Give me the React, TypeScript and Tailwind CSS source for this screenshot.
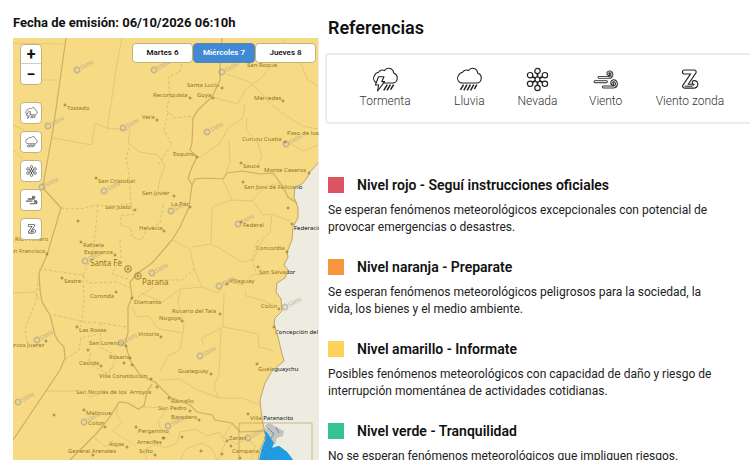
import type { ReactNode } from "react";

const CLOUD =
  "M4 15.5C1.5 14 1 11 2.3 8.8C3 7 4.4 5.6 6.6 5.2C7.6 3.4 10.4 2.4 12.6 3.6C14 .8 18.6 .2 20.6 3.2C21.4 4.2 21.6 5 21.6 6C24.2 7 25.6 9 25.2 12C24.8 14.4 23 16 20.6 16";

function Storm({ className }: { className?: string }) {
  return (
    <svg viewBox="0 0 27 25" className={className} fill="none" stroke="#222" strokeWidth="1.1" strokeLinejoin="round" aria-hidden="true">
      <path d={CLOUD + "H12"} />
      <path d="M6.5 9.8H12L9.8 14.6H12.6L5.6 24L6.6 18H3.4Z" fill="#fff" />
      <path d="M15.2 17.6L11.8 23.4M18.4 17.6L15 23.4M21.6 17.6L18.6 22.6" strokeWidth="1.5" />
    </svg>
  );
}

function Rain({ className }: { className?: string }) {
  return (
    <svg viewBox="0 0 27 25" className={className} fill="none" stroke="#222" strokeWidth="1.1" strokeLinejoin="round" aria-hidden="true">
      <path d={CLOUD + "H6.5C5.6 16 4.8 15.9 4 15.5"} />
      <path d="M7.6 17.6L4.4 22.8M11 17.6L7.8 23.4M14.4 17.6L11.2 23.4M17.8 17.6L14.6 23.4M20.8 17.6L18.4 22" strokeWidth="1.5" />
    </svg>
  );
}

const flakes = [
  [13.5, 4], [20.9, 8.2], [20.9, 16.8], [13.5, 21], [6.1, 16.8], [6.1, 8.2],
];

function Snow({ className }: { className?: string }) {
  return (
    <svg viewBox="0 0 27 25" className={className} fill="#fff" stroke="#222" strokeWidth="1.2" aria-hidden="true">
      {flakes.map(([x, y]) => (
        <path key={`${x}-${y}`} d={`M13.5 12.5L${x} ${y}`} strokeWidth="1.8" />
      ))}
      {flakes.map(([x, y]) => (
        <circle key={`${x}-${y}`} cx={x} cy={y} r="2.7" />
      ))}
      <circle cx="13.5" cy="12.5" r="2.5" />
    </svg>
  );
}

function Wind({ className }: { className?: string }) {
  const d =
    "M7 10.4H16.6C21 10.4 20.8 4.8 17.4 4.9C15.6 5 15.2 7 16.8 7.6M3 14.7H14.4M11.4 20H21C25.6 20 25.4 13.8 21.6 13.8C19.4 13.9 19 16.4 20.8 17";
  return (
    <svg viewBox="0 0 27 25" className={className} fill="none" strokeLinecap="round" aria-hidden="true">
      <path d={d} stroke="#333" strokeWidth="2.9" />
      <path d={d} stroke="#fff" strokeWidth="1" />
    </svg>
  );
}

function Zonda({ className }: { className?: string }) {
  const d = "M8.4 5H18.2L8.6 19.2H17.6C20.4 19.2 20.6 15.6 18.2 15.6";
  return (
    <svg viewBox="0 0 27 25" className={className} fill="none" strokeLinecap="round" strokeLinejoin="round" aria-hidden="true">
      <path d={d} stroke="#222" strokeWidth="5" />
      <path d={d} stroke="#fff" strokeWidth="2.8" />
      <path d="M9 19.2H16.4L18 17.4" stroke="#222" strokeWidth="1" />
    </svg>
  );
}

const phenomena = [
  { label: "Tormenta", Icon: Storm },
  { label: "Lluvia", Icon: Rain },
  { label: "Nevada", Icon: Snow },
  { label: "Viento", Icon: Wind },
  { label: "Viento zonda", Icon: Zonda },
];

const levels = [
  {
    color: "bg-[#dc5362]",
    title: "Nivel rojo - Seguí instrucciones oficiales",
    text: "Se esperan fenómenos meteorológicos excepcionales con potencial de provocar emergencias o desastres.",
  },
  {
    color: "bg-[#f59640]",
    title: "Nivel naranja - Preparate",
    text: "Se esperan fenómenos meteorológicos peligrosos para la sociedad, la vida, los bienes y el medio ambiente.",
  },
  {
    color: "bg-[#fdd15a]",
    title: "Nivel amarillo - Informate",
    text: "Posibles fenómenos meteorológicos con capacidad de daño y riesgo de interrupción momentánea de actividades cotidianas.",
  },
  {
    color: "bg-[#35c48f]",
    title: "Nivel verde - Tranquilidad",
    text: "No se esperan fenómenos meteorológicos que impliquen riesgos.",
  },
];

// label, x, baseline, dot x, dot y
type City = [string, number, number, number?, number?];

const cities: City[] = [
  ["Tostado", 67, 110, 65, 105],
  ["Reconquista", 153, 97, 190, 98],
  ["Santa Lucia", 187, 87, 222, 88],
  ["Goya", 197, 97, 213, 98],
  ["San Roque", 247, 67],
  ["Mercedes", 254, 100, 283, 101],
  ["Vera", 142, 119, 157, 120],
  ["Curuzu Cuatia", 242, 141, 285, 142],
  ["Paso de los Libres", 287, 135],
  ["Esquina", 173, 156, 197, 157],
  ["Sauce", 243, 168, 241, 163],
  ["Monte Caseros", 264, 172, 309, 173],
  ["San Cristobal", 98, 183, 96, 178],
  ["San Javier", 142, 195, 174, 196],
  ["La Paz", 171, 206, 190, 207],
  ["San Justo", 105, 209, 135, 210],
  ["Helvecia", 139, 230, 164, 231],
  ["Federal", 243, 227, 241, 222],
  ["Concordia", 256, 250, 287, 252],
  ["Rio Primero", 15, 241],
  ["San Francisco", 7, 253, 47, 254],
  ["Rafaela", 83, 247, 81, 242],
  ["Esperanza", 84, 254, 115, 255],
  ["Sastre", 64, 283, 62, 278],
  ["Coronda", 90, 298, 116, 292],
  ["Diamante", 134, 304, 132, 298],
  ["Villaguay", 229, 283, 227, 284],
  ["Colon", 261, 308, 279, 309],
  ["Rosario del Tala", 172, 313, 220, 314],
  ["Nogoya", 159, 320, 182, 321],
  ["Las Rosas", 79, 332, 77, 327],
  ["Victoria", 138, 336, 161, 337],
  ["San Lorenzo", 89, 345, 126, 346],
  ["Marcos Juarez", 5, 347, 46, 341],
  ["Rosario", 109, 359, 130, 358],
  ["Casilda", 79, 365, 101, 366],
  ["Villa Constitución", 99, 378, 151, 379],
  ["Gualeguay", 178, 373, 211, 374],
  ["San Nicolás de los  Arroyos", 76, 394, 157, 387],
  ["Ramallo", 171, 403, 169, 398],
  ["San Pedro", 158, 410, 190, 411],
  ["Baradero", 171, 419, 199, 420],
  ["Villa Paranacito", 250, 420, 248, 414],
  ["Melincue", 86, 415, 84, 410],
  ["Colon", 88, 425, 105, 427],
  ["Pergamino", 138, 433, 136, 427],
  ["Arrecifes", 137, 444, 164, 438],
  ["Rojas", 109, 446, 127, 447],
  ["General Arenales", 68, 453, 93, 455],
  ["Salto", 139, 453, 155, 455],
  ["Zarate", 229, 440, 227, 441],
  ["Campana", 232, 453, 231, 446],
  ["San José de Feliciano", 244, 189, 243, 182],
  ["Federación", 294, 230, 292, 224],
  ["San Salvador", 259, 274, 258, 267],
  ["Concepción del Uruguay", 275, 334, 274, 327],
  ["Gualeguaychu", 258, 371, 257, 364],
];

const dots = [
  [288, 208], [78, 221], [88, 350], [54, 415], [124, 363], [132, 365],
  [163, 438], [182, 437], [201, 451], [240, 458], [222, 454],
];

const watermarks = [
  [77, 70], [154, 70], [222, 72], [48, 126], [123, 128], [207, 132], [286, 144], [42, 187],
  [104, 191], [171, 211], [238, 224], [85, 261], [152, 273], [219, 286], [285, 307], [37, 340],
  [121, 343], [200, 356], [18, 402], [84, 422], [168, 426], [248, 438],
];

const COAST =
  "L310 172L307 178L302 184L295 187L294 197L298 208L298 218L293 227L292 240L287 252L288 257L284 265L288 270L285 278L277 283L276 292L281 299L282 311L275 318L274 324L278 337L281 350L284 361L272 371L265 383L260 400L261 410L263 424L266 436L260 450L258 460";

function AlertMap() {
  return (
    <svg viewBox="13 38 306 422" preserveAspectRatio="xMinYMin slice" className="block h-full w-full" role="img" aria-label="Mapa de alertas">
      <rect x="13" y="38" width="306" height="422" fill="#eeebe0" />
      <path d="M265 425L270 423L276 427L284 431L283 436L277 438L275 445L268 440Z" fill="#c3c3c2" />
      <path d="M263 428L268 434L274 443L272 448L279 446L287 452L293 460H259L262 448L266 438Z" fill="#209de2" />

      <g fill="#111" className="font-['Noto_Sans',sans-serif]">
        <g fontSize="6">
          {cities.map(([name, x, y]) => (
            <text key={`${name}-${y}`} x={x} y={y} className="whitespace-pre">{name}</text>
          ))}
        </g>
        <g fontSize="8">
          <text x="90" y="266">Santa Fe</text>
          <text x="142" y="285">Parana</text>
        </g>
      </g>

      {/* yellow alert area, see-through so the labels stay readable */}
      <path d={`M13 38H318V163${COAST}H13Z`} fill="#ffc928" fillOpacity=".5" />
      <path d={`M318 163${COAST}`} fill="none" stroke="#bca767" strokeWidth="1" />
      <path d="M264 430L268 435L273 443L272 448L279 446L287 452L293 460H260L261 451L266 438Z" fill="#209de2" />
      <path d="M264 437L270 441L267 446L273 450M262 450L267 453L264 460M268 428L274 434L270 439M276 427L279 433" fill="none" stroke="#557c9a" strokeWidth=".8" />

      <g fill="none" stroke="#ccb062" strokeWidth="1.2">
        <path d="M66 38L53 130L44 180L43 188L61 208L47 255L39 273L40 290L42 302L50 315L55 335L58 341L64 347L65 358L60 370L13 440" />
        <path d="M222 38L220 63L220 80L212 97L198 110L193 118L192 143L190 150L197 157L192 167L188 178L192 185L195 179L205 178L223 179L227 173L243 171L260 174L273 173L282 185L288 197L297 203" />
        <path d="M192 185L189 207L180 227L172 240L160 254L152 263L138 273L130 282L132 297L128 307L128 333L125 343L130 360L140 375L155 382L170 397L190 405L197 412L212 415L215 420L232 423L240 432L263 431" />
        <path d="M70 460L96 434L110 417L119 402L128 403L138 409L144 406L147 392L152 384" />
      </g>
      <g fill="none" stroke="#e2c87a" strokeWidth="1">
        <path d="M13 43L63 44M40 80H60M122 38L117 63L112 97L107 130" />
        <path d="M53 138L92 145L95 123L107 128L130 130L128 143L140 152L158 155L165 166L160 178L157 197" />
        <path d="M47 391H84L90 397L102 393M13 293L35 292L39 299M13 125L22 129L31 137" />
        <path d="M286 38L278 56L262 77L245 90L238 104L212 97M245 104L243 118L228 128L220 143L199 158" />
        <path d="M226 74L250 82L275 108L290 118L302 126L318 129M247 118L246 130L258 143L262 156L257 166" />
        <path d="M229 141L230 163L226 173M223 180L232 200L212 207L211 244L193 247M232 200L252 201L264 187L281 183" />
        <path d="M252 201L263 215L272 214L290 221M272 214L270 232L262 240L254 259L242 262L212 244" />
        <path d="M318 86L308 80L300 62L288 53M318 145L303 151L295 146L285 142" />
        <path d="M173 240L190 249L194 268L202 287L181 289L162 302L141 293M202 287L219 293L224 281L242 285L252 275L270 274" />
        <path d="M224 293L223 327L202 338L203 345M183 333L180 350L168 356L160 371M223 327L240 330L258 334L259 347L274 351" />
        <path d="M181 289L178 302L184 323L183 333L159 329L148 316L137 317L132 307M245 290L246 296L262 300L276 307" />
        <path d="M221 328L219 374L214 387L219 398L242 398L260 405M160 380L180 379L197 390L219 398" />
        <path d="M147 460L144 450L157 444L165 448L177 443L180 432L196 429L207 436L219 432L225 444L218 460" />
        <path d="M119 402L116 413L122 423L113 431L136 446M144 407L168 408L158 421L161 430M92 436L106 447L113 440" />
        <path d="M180 460L186 449L203 443L213 450L217 460M232 424L223 437L237 444L247 438L255 446L251 460" />
      </g>
      <g fill="none" stroke="#d9bf70" strokeWidth="1" strokeDasharray="3 2">
        <path d="M181 45L184 53L180 72L168 77L170 97L166 110L175 118L194 116M168 113L164 130L172 145L158 165" />
        <path d="M61 208L80 209L98 205L116 206L131 204L129 174L126 158L129 148M98 205L93 254M131 204L134 214L121 216L120 225L131 228L132 237L142 240L146 230L160 223L164 202" />
        <path d="M39 269L83 275L88 283L117 282L129 288M83 275L84 302L81 327M54 315L84 322L101 323L126 327" />
        <path d="M39 273L36 301L30 315L25 330L28 347M66 359L79 350L81 338L98 334M101 323L100 347L117 356L108 376M91 353L88 363L106 373L114 366" />
        <path d="M13 150L22 158L28 171L42 184M93 254L83 275M120 240L121 257L112 274L128 279" />
        <path d="M258 240L252 259L256 272M138 297L151 289L158 280L182 280L195 268" />
      </g>

      <g className="font-['Noto_Sans',sans-serif]">
        {watermarks.map(([x, y]) => (
          <g key={`${x}-${y}`} transform={`translate(${x} ${y})`} opacity=".5">
            <circle r="2.8" fill="#d8d0b4" stroke="#948f88" strokeWidth="1.4" />
            <text x="4" y="2" transform="rotate(-27)" fontSize="6" fontWeight="600" fill="#a8a08c">SMN</text>
          </g>
        ))}
      </g>
      <g fill="none" stroke="#9c8244" strokeWidth="1">
        {dots.map(([x, y]) => <circle key={`${x}-${y}`} cx={x} cy={y} r="1" />)}
        {cities.map(([name, , , x, y]) =>
          x ? <circle key={`${name}-${x}`} cx={x} cy={y} r="1" /> : null
        )}
        <circle cx="128" cy="269" r="3.3" />
        <circle cx="128" cy="269" r="1" />
        <circle cx="138" cy="276" r="3.3" />
        <circle cx="138" cy="276" r="1" />
      </g>
      <path d="M239 460V423H312V460" fill="none" stroke="#b5a06a" strokeWidth=".7" />
    </svg>
  );
}

function MapButton({ label, children }: { label: string; children: ReactNode }) {
  return (
    <button type="button" aria-label={label} className="flex size-[22px] items-center justify-center rounded-sm border border-[#c6b377] bg-white">
      {children}
    </button>
  );
}

export default function App() {
  return (
    <main className="grid h-screen grid-cols-[306fr_422fr] grid-rows-[minmax(0,1fr)] gap-[9px] overflow-hidden bg-white pl-[13px] font-[Roboto,sans-serif] text-[#111]">
      <section className="flex min-w-0 flex-col pt-3.5">
        <h2 className="h-6 shrink-0 text-[13px] leading-[18px] font-bold whitespace-nowrap">Fecha de emisión: 06/10/2026 06:10h</h2>
        <div className="relative min-h-0 flex-1">
          <AlertMap />
          <div className="absolute top-1.5 left-[7px] flex flex-col gap-[17px]">
            <div className="flex w-[22px] flex-col divide-y divide-[#ccc] rounded-sm border border-[#c6b377] bg-white text-base leading-none font-bold">
              <button type="button" className="h-[19px] leading-[19px]" aria-label="Acercar">+</button>
              <button type="button" className="h-5 leading-[19px]" aria-label="Alejar">−</button>
            </div>
            <div className="flex flex-col gap-[7px]">
              {phenomena.map(({ label, Icon }) => (
                <MapButton key={label} label={label}>
                  <Icon className="w-[13px]" />
                </MapButton>
              ))}
            </div>
          </div>
          <div className="absolute top-[5px] right-[3px] flex text-[8px] font-semibold">
            <button type="button" className="h-5 w-[61px] rounded-sm border border-[#c6b377] bg-white">Martes 6</button>
            <button type="button" className="h-5 w-[62px] rounded-sm border border-[#5a87ac] bg-[#4189d4] text-white">Miércoles 7</button>
            <button type="button" className="h-5 w-[61px] rounded-sm border border-[#c6b377] bg-white">Jueves 8</button>
          </div>
        </div>
      </section>

      <section className="min-w-0 pt-4">
        <h1 className="text-lg leading-6 font-semibold">Referencias</h1>
        <div className="mt-[13px] -mr-2 -ml-[3px] grid h-[71px] grid-cols-[100fr_68fr_68fr_68fr_100fr] rounded-sm border-2 border-[#ececec] pt-3 pr-4 pl-2">
          {phenomena.map(({ label, Icon }) => (
            <div key={label} className="flex flex-col items-center">
              <Icon className="w-[27px]" />
              <span className="text-xs leading-[18px] font-light whitespace-nowrap text-[#333]">{label}</span>
            </div>
          ))}
        </div>
        <div className="mt-[50px] flex flex-col gap-5">
          {levels.map(({ color, title, text }) => (
            <article key={title}>
              <div className="flex h-[22px] items-center gap-[13px]">
                <span className={`size-4 ${color}`} />
                <h3 className="text-sm leading-5 font-semibold">{title}</h3>
              </div>
              <p className="mt-1.5 pr-7 text-xs leading-[17px] text-[#222]">{text}</p>
            </article>
          ))}
        </div>
      </section>
    </main>
  );
}
